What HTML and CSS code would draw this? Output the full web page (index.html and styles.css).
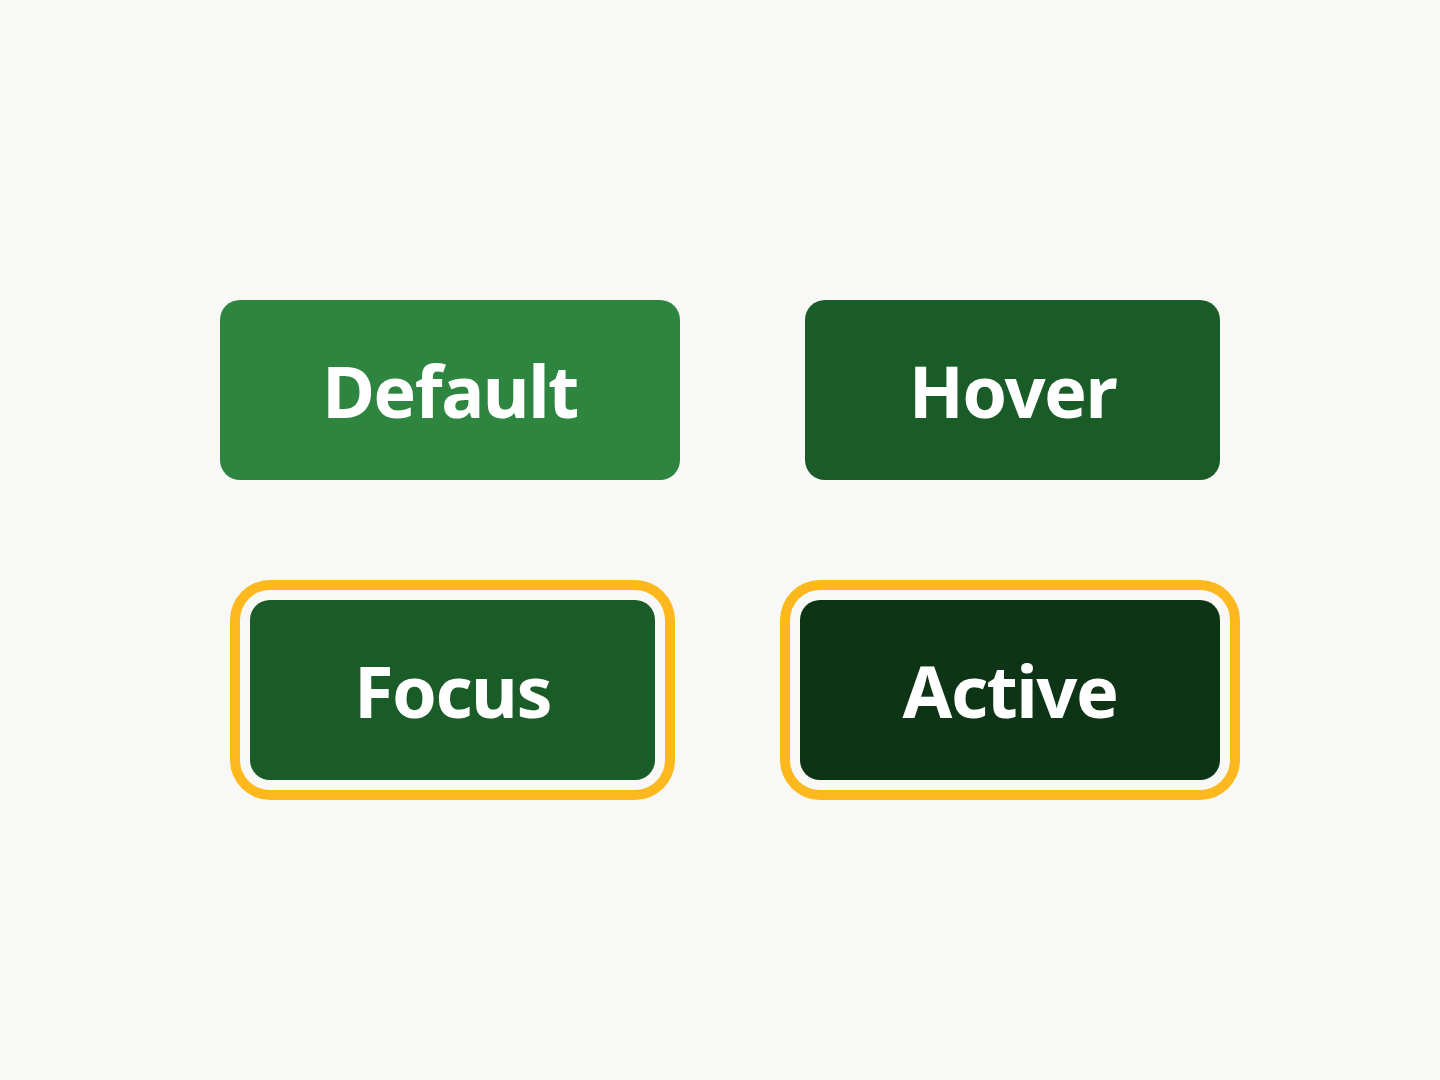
FILE: index.html
```html
<!DOCTYPE html>
<html lang="en">
<head>
    <meta charset="UTF-8">
    <meta name="viewport" content="width=device-width, initial-scale=1.0">
    <title>Button States</title>
    <link rel="stylesheet" href="styles.css">
</head>
<body>
    <main class="states">
        <button class="btn btn-default">Default</button>
        <button class="btn btn-hover">Hover</button>
        <button class="btn btn-focus">Focus</button>
        <button class="btn btn-active">Active</button>
    </main>
</body>
</html>
```

FILE: styles.css
```css
:root {
    --green: #2e8540;
    --green-dark: #1a5c28;
    --green-darkest: #0e3416;
    --gold: #fdb81e;
    --background: #f8f8f6;
}

body {
    margin: 0;
    background-color: var(--background);
    font-family: 'Noto Sans', 'Open Sans', sans-serif;
}

/* two columns, two rows of buttons */
.states {
    display: grid;
    grid-template-columns: 460px 460px;
    grid-template-rows: 180px 180px;
    column-gap: 100px;
    row-gap: 120px;
    padding: 300px 0 300px 220px;
}

.btn {
    height: 180px;
    padding: 0;
    border: none;
    border-radius: 20px;
    color: white;
    font-family: inherit;
    font-size: 72px;
    font-weight: 700;
    letter-spacing: -1.5px;
    cursor: pointer;
}

.btn-default {
    width: 460px;
    background: var(--green);
}

.btn-hover {
    width: 415px;
    justify-self: end;
    margin-right: 20px;
    background: var(--green-dark);
}

/* focus ring: gap in page colour, then gold band */
.btn-focus,
.btn-active {
    box-shadow: 0 0 0 10px var(--background), 0 0 0 20px var(--gold);
}

.btn-focus {
    width: 405px;
    justify-self: center;
    margin-left: 5px;
    background: var(--green-dark);
}

.btn-active {
    width: 420px;
    justify-self: center;
    background: var(--green-darkest);
}
```
